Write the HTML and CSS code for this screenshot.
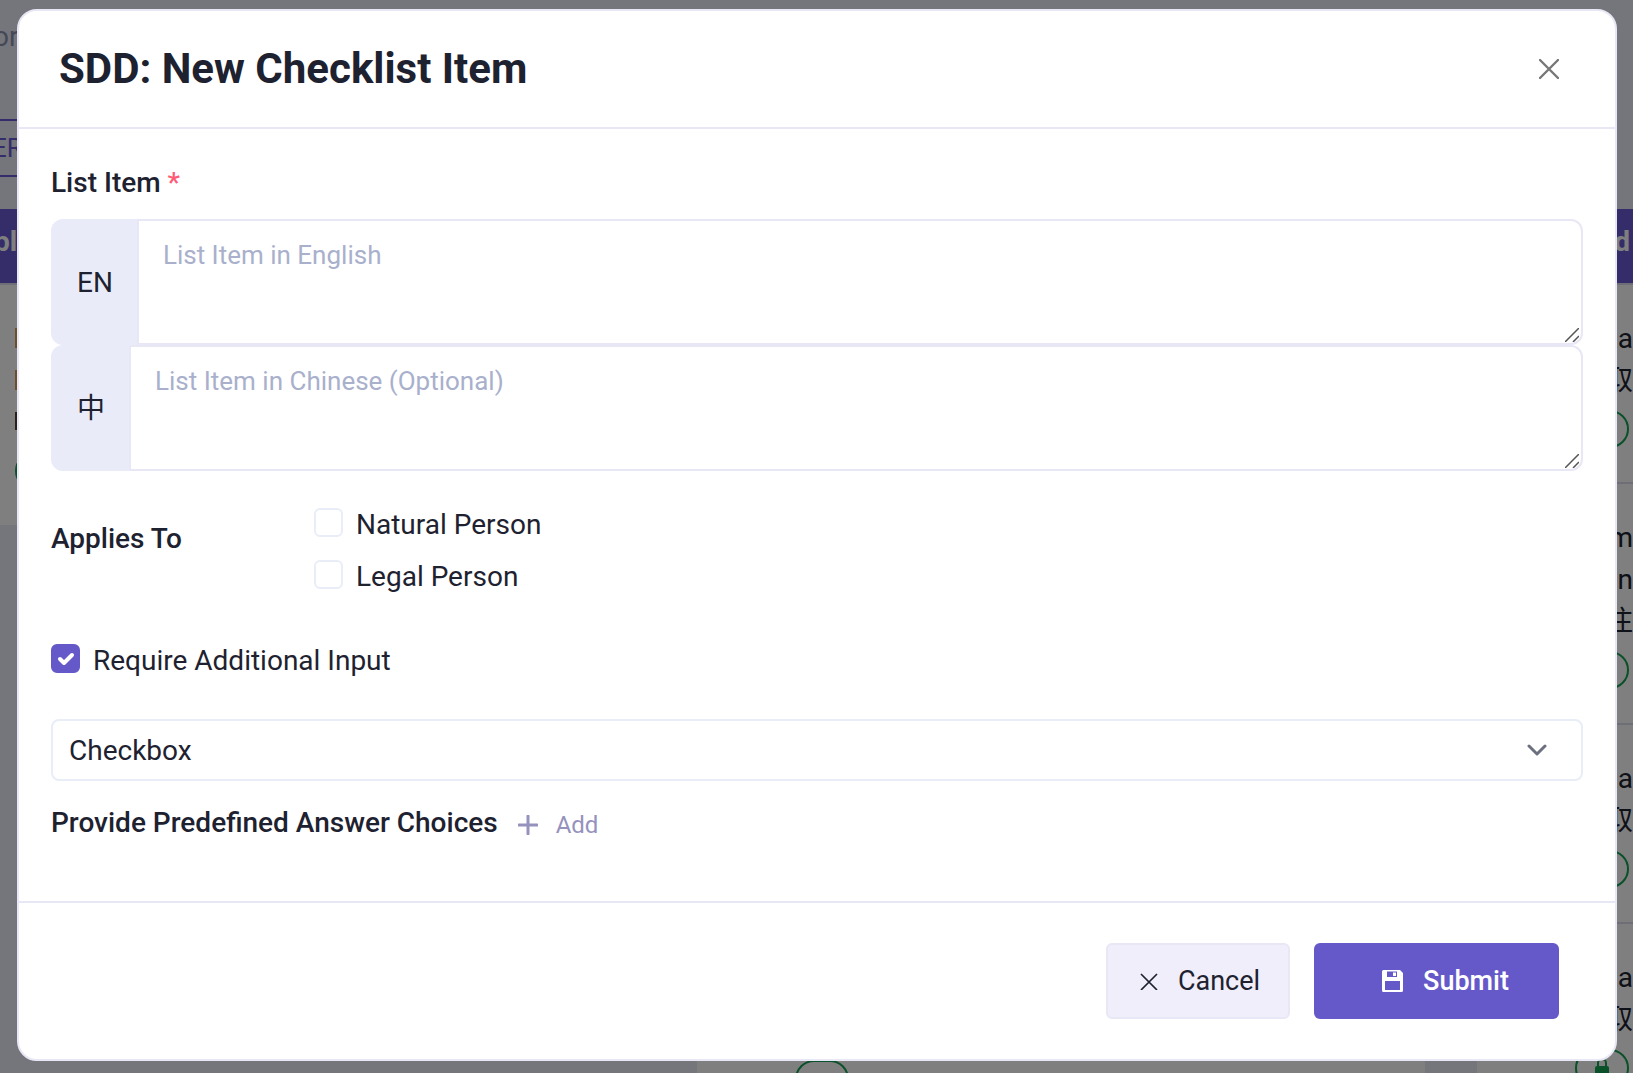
FILE: index.html
```
<!DOCTYPE html>
<html lang="en">
	<head>
		<meta charset="UTF-8" />
		<meta name="viewport" content="width=device-width, initial-scale=1.0" />
		<title>SDD: New Checklist Item</title>
		<link rel="stylesheet" href="styles.css">
	</head>
	<body>
		<!-- Page behind the modal -->
		<div class="page" aria-hidden="true">
			<div class="page-crumb">or</div>
			<div class="page-toolbar"><span>ER</span></div>
			<div class="board">
				<div class="column column-first">
					<div class="column-head">pl</div>
					<div class="column-body">
						<div class="mark"></div>
						<div class="mark"></div>
						<div class="mark mark-dark"></div>
						<span class="pill"></span>
					</div>
				</div>
				<div class="column column-middle">
					<div class="column-head"></div>
					<div class="column-body">
						<span class="pill"></span>
					</div>
				</div>
				<div class="column column-last">
					<div class="column-head">d</div>
					<div class="entry">
						<p>ta</p>
						<p>取</p>
						<span class="pill"></span>
					</div>
					<div class="entry">
						<p>m</p>
						<p>n</p>
						<p>注</p>
						<span class="pill"></span>
					</div>
					<div class="entry">
						<p>ta</p>
						<p>取</p>
						<span class="pill"></span>
					</div>
					<div class="entry">
						<p>ta</p>
						<p>取</p>
						<span class="pill">
							<svg width="16" height="20" viewBox="0 0 16 20">
								<rect x="1" y="8" width="14" height="11" rx="2" fill="currentColor" />
								<path d="M4 9V5a4 4 0 0 1 8 0v4" fill="none" stroke="currentColor" stroke-width="2" />
							</svg>
						</span>
					</div>
				</div>
			</div>
		</div>

		<div class="overlay">
			<form class="modal" role="dialog" aria-labelledby="modal-title">
				<header class="modal-header">
					<h1 id="modal-title">SDD: New Checklist Item</h1>
					<button type="button" class="close-btn" aria-label="Close">
						<svg width="20" height="20" viewBox="0 0 20 20">
							<path d="M1 1l18 18M19 1L1 19" fill="none" stroke="currentColor" stroke-width="2.400" stroke-linecap="round" />
						</svg>
					</button>
				</header>

				<div class="modal-body">
					<label class="field-label" for="item-en">List Item <span class="required">*</span></label>
					<div class="input-group">
						<label class="addon" for="item-en">EN</label>
						<textarea id="item-en" name="item-en" placeholder="List Item in English"></textarea>
						<svg class="grip" width="14" height="14" viewBox="0 0 14 14">
							<path d="M0 14L14 0M8 14l6-6" fill="none" stroke="currentColor" stroke-width="1.500" />
						</svg>
					</div>
					<div class="input-group">
						<label class="addon" for="item-zh">中</label>
						<textarea id="item-zh" name="item-zh" placeholder="List Item in Chinese (Optional)"></textarea>
						<svg class="grip" width="14" height="14" viewBox="0 0 14 14">
							<path d="M0 14L14 0M8 14l6-6" fill="none" stroke="currentColor" stroke-width="1.500" />
						</svg>
					</div>

					<div class="applies" role="group" aria-labelledby="applies-label">
						<span class="field-label" id="applies-label">Applies To</span>
						<div class="check-list">
							<label class="check">
								<span class="check-box"><input type="checkbox" name="natural" /></span>
								Natural Person
							</label>
							<label class="check">
								<span class="check-box"><input type="checkbox" name="legal" /></span>
								Legal Person
							</label>
						</div>
					</div>

					<label class="check require">
						<span class="check-box">
							<input type="checkbox" name="require" checked />
							<svg class="tick" width="29" height="29" viewBox="0 0 29 29">
								<path d="M9 15l4 4 8-8" fill="none" stroke="#fff" stroke-width="4" stroke-linecap="round" stroke-linejoin="round" />
							</svg>
						</span>
						Require Additional Input
					</label>

					<div class="select-wrap">
						<select name="input-type" aria-label="Input type">
							<option>Checkbox</option>
						</select>
						<svg class="chevron" width="20" height="12" viewBox="0 0 20 12">
							<path d="M2 2l8 8 8-8" fill="none" stroke="currentColor" stroke-width="3" stroke-linecap="round" stroke-linejoin="round" />
						</svg>
					</div>

					<div class="choices">
						<span class="field-label">Provide Predefined Answer Choices</span>
						<button type="button" class="add-btn">
							<svg width="20" height="20" viewBox="0 0 20 20">
								<path d="M10 1v18M1 10h18" fill="none" stroke="currentColor" stroke-width="3" stroke-linecap="round" />
							</svg>
							Add
						</button>
					</div>
				</div>

				<footer class="modal-footer">
					<button type="button" class="btn btn-light">
						<svg width="18" height="18" viewBox="0 0 18 18">
							<path d="M1 2l16 16M17 2L1 18" fill="none" stroke="currentColor" stroke-width="1.700" />
						</svg>
						Cancel
					</button>
					<button type="submit" class="btn btn-primary">
						<svg width="21" height="22" viewBox="0 0 21 22">
							<path fill="currentColor" fill-rule="evenodd" d="M1.500 0H18l3 3v17.500a1.500 1.500 0 0 1-1.500 1.500h-18A1.500 1.500 0 0 1 0 20.500v-19A1.500 1.500 0 0 1 1.500 0zM5 1.500V7h10V1.500zM3 11v9h15v-9z" />
							<path fill="currentColor" d="M11 2.500h3V6h-3z" />
						</svg>
						Submit
					</button>
				</footer>
			</form>
		</div>
	</body>
</html>
```
FILE: styles.css
```
* {
	margin: 0;
	padding: 0;
	box-sizing: border-box;
}

body {
	font-family: Roboto, "Noto Sans CJK SC", sans-serif;
	font-size: 28px;
	line-height: 42px;
	color: #1e2230;
	background-color: #ebecf8;
	height: 100vh;
	overflow: hidden;
}

button,
textarea,
select {
	font-family: inherit;
	color: inherit;
}

/* Page behind the modal */
.page {
	display: flex;
	flex-direction: column;
	height: 100vh;
	padding-top: 16px;
	overflow: hidden;
}

.page-crumb {
	color: #8a93ad;
	margin-left: -7px;
}

.page-toolbar {
	display: flex;
	flex-shrink: 0;
	align-items: center;
	width: 200px;
	height: 58px;
	margin: 61px 0 32px;
	border: 2px solid #685ad2;
	border-left: 0;
	color: #685ad2;
	font-size: 26px;
}

.page-toolbar span {
	margin-left: -8px;
}

.board {
	flex: 1;
	display: grid;
	grid-template-columns: 41fr 728px 156px;
	column-gap: 52px;
	min-height: 0;
}

.column {
	background-color: #fff;
}

.column-first {
	align-self: start;
	height: 316px;
}

.column-first,
.column-middle {
	overflow: hidden;
}

.column-head {
	height: 76px;
	line-height: 66px;
	background-color: #685ad2;
	border-bottom: 2px solid #dddded;
	color: #fff;
	font-weight: 700;
}

.column-first .column-head {
	text-indent: -6px;
}

.column-last .column-head {
	padding-right: 3px;
	text-align: right;
}

.column-first .column-body {
	padding: 43px 15px 0;
}

.column-middle .column-body {
	padding: 767px 98px 0;
}

.mark {
	width: 4px;
	height: 20px;
	margin-bottom: 22px;
	background-color: #dc9a55;
}

.mark-dark {
	height: 18px;
	background-color: #55402f;
}

.entry {
	padding: 33px 0 34px;
	border-bottom: 2px solid #dddded;
	text-align: right;
}

.pill {
	display: flex;
	align-items: center;
	justify-content: center;
	width: 54px;
	height: 38px;
	margin: 8px 4px 0 auto;
	border: 2px solid #15a050;
	border-radius: 19px;
	color: #15a050;
}

.column-first .pill,
.column-middle .pill {
	margin-left: 0;
}

.overlay {
	position: fixed;
	inset: 0;
	padding: 9px 16px 12px 17px;
	background-color: rgba(0, 0, 0, 0.5);
	overflow: auto;
}

/* Modal */
.modal {
	background-color: #fff;
	border: 2px solid #e8e7f6;
	border-radius: 20px;
}

.modal-header {
	display: flex;
	align-items: center;
	justify-content: space-between;
	padding: 33px 56px 33px 40px;
	border-bottom: 2px solid #e8e7f6;
}

h1 {
	font-size: 42px;
	line-height: 50px;
	font-weight: 700;
}

.close-btn {
	display: flex;
	border: 0;
	background: none;
	color: #777;
	cursor: pointer;
}

.modal-body {
	padding: 33px 32px 57px;
}

.field-label {
	display: block;
	font-weight: 500;
}

.required {
	color: #ff5b75;
}

.modal-body > .field-label {
	margin-bottom: 15px;
}

.input-group {
	position: relative;
	display: flex;
}

.addon {
	display: flex;
	align-items: center;
	padding: 2px 24px 0 26px;
	background-color: #e9ebf8;
	border-radius: 12px 0 0 12px;
}

textarea {
	flex: 1;
	height: 126px;
	padding: 15px 24px;
	border: 2px solid #e8e7f6;
	border-radius: 0 12px 12px 0;
	font-size: 26px;
	line-height: 39px;
	resize: vertical;
	outline: none;
}

textarea::placeholder {
	color: #a9b0cc;
}

textarea::-webkit-resizer {
	display: none;
}

.grip {
	position: absolute;
	right: 4px;
	bottom: 3px;
	color: #555;
	pointer-events: none;
}

textarea:focus,
select:focus {
	border-color: #6559c9;
}

.applies {
	display: grid;
	grid-template-columns: 263px 1fr;
	margin-top: 33px;
}

.applies .field-label {
	padding-top: 14px;
}

.check-list {
	display: grid;
	gap: 10px;
	justify-items: start;
}

.check {
	display: flex;
	gap: 13px;
}

.check-box {
	position: relative;
	width: 29px;
	height: 29px;
	margin-top: 4px;
}

.check input {
	appearance: none;
	display: block;
	width: 29px;
	height: 29px;
	border: 2px solid #e9edf8;
	border-radius: 6px;
	background-color: #fff;
}

.check input:checked {
	background-color: #6559c9;
	border-color: #6559c9;
}

.tick {
	position: absolute;
	inset: 0;
	pointer-events: none;
}

.check input:not(:checked) + .tick {
	display: none;
}

.require {
	margin-top: 42px;
}

.select-wrap {
	position: relative;
	margin-top: 37px;
}

select {
	display: block;
	appearance: none;
	width: 100%;
	height: 62px;
	padding: 0 60px 0 16px;
	border: 2px solid #e9edf8;
	border-radius: 8px;
	background-color: #fff;
	font-size: 28px;
	outline: none;
}

.chevron {
	position: absolute;
	right: 36px;
	top: 25px;
	color: #6b7080;
	pointer-events: none;
}

.choices {
	display: flex;
	align-items: center;
	gap: 20px;
	margin-top: 21px;
}

.add-btn {
	display: flex;
	align-items: center;
	gap: 18px;
	padding-top: 4px;
	border: 0;
	background: none;
	color: #9592bd;
	font-size: 24px;
	line-height: 32px;
	cursor: pointer;
}

.modal-footer {
	display: flex;
	justify-content: flex-end;
	gap: 24px;
	padding: 40px 56px;
	border-top: 2px solid #e8e7f6;
}

.btn {
	display: flex;
	align-items: center;
	justify-content: center;
	gap: 20px;
	height: 76px;
	padding: 0 28px 0 32px;
	border: 2px solid transparent;
	border-radius: 6px;
	font-size: 27px;
	cursor: pointer;
}

.btn-light {
	background-color: #f0eefb;
	border-color: #e8e7f6;
}

.btn-primary {
	padding: 0 48px 0 66px;
	background-color: #6559c9;
	color: #fff;
	font-weight: 500;
}
```
